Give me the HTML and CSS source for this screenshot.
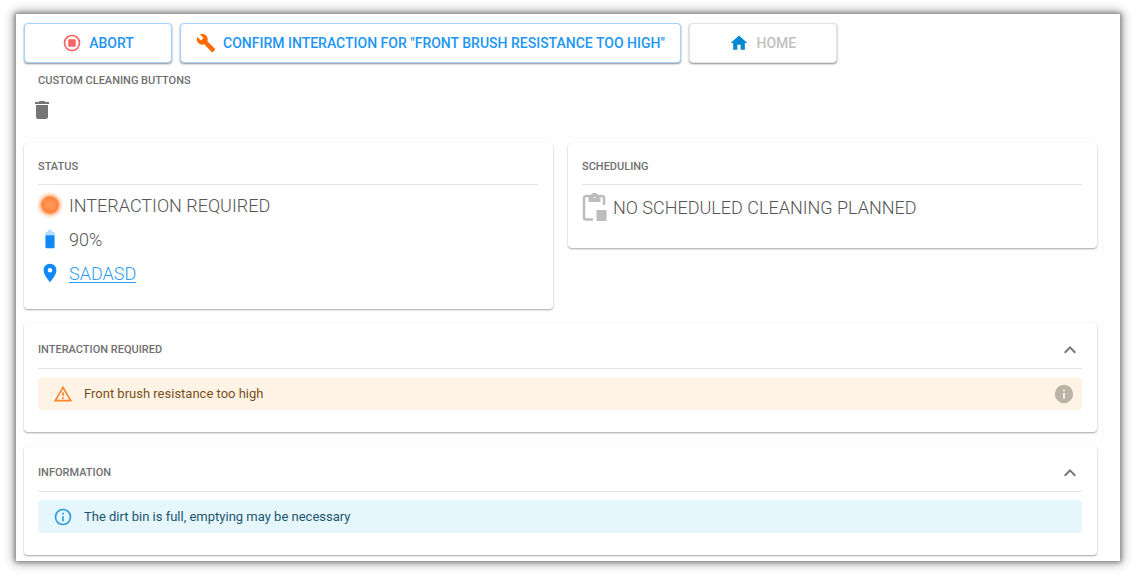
FILE: index.html
```
<!DOCTYPE html>
<html lang="en">
<head>
    <meta charset="UTF-8">
    <meta name="viewport" content="width=device-width, initial-scale=1.0">
    <title>Robot Dashboard</title>
    <link rel="stylesheet" href="styles.css">
</head>
<body>
    <main class="panel">
        <div class="actions">
            <button type="button" class="btn">
                <svg class="icon abort-icon" viewBox="0 0 24 24"><circle cx="12" cy="12" r="9" fill="none" stroke="currentColor" stroke-width="2"/><rect x="7.500" y="7.500" width="9" height="9" rx="1" fill="currentColor"/></svg>
                Abort
            </button>
            <button type="button" class="btn">
                <svg class="icon wrench-icon" viewBox="0 0 24 24"><path fill="currentColor" d="M22.7 19l-9.1-9.1c.9-2.3.4-5-1.5-6.9-2-2-5-2.4-7.4-1.3L9 6 6 9 1.6 4.7C.4 7.1.9 10.1 2.9 12.1c1.9 1.9 4.6 2.4 6.9 1.5l9.1 9.1c.4.4 1 .4 1.4 0l2.3-2.3c.5-.4.5-1.1.1-1.4z"/></svg>
                Confirm interaction for "Front brush resistance too high"
            </button>
            <button type="button" class="btn" disabled>
                <svg class="icon home-icon" viewBox="0 0 24 24"><path fill="currentColor" d="M10 20v-6h4v6h5v-8h3L12 3 2 12h3v8z"/></svg>
                Home
            </button>
        </div>

        <section class="custom">
            <h2>Custom cleaning buttons</h2>
            <button type="button" class="icon-btn" aria-label="Delete">
                <svg class="icon" viewBox="0 0 24 24"><path fill="currentColor" d="M6 19c0 1.1.9 2 2 2h8c1.1 0 2-.9 2-2V7H6v12zM19 4h-3.500l-1-1h-5l-1 1H5v2h14V4z"/></svg>
            </button>
        </section>

        <div class="cards">
            <section class="card">
                <header class="card-header"><h2>Status</h2></header>
                <ul class="status-list">
                    <li>
                        <span class="status-icon"><span class="status-light"></span></span>
                        Interaction required
                    </li>
                    <li>
                        <span class="status-icon">
                            <svg class="icon battery-icon" viewBox="0 0 24 24"><path fill="currentColor" fill-opacity=".3" d="M17 5.300C17 4.600 16.400 4 15.700 4H14V2h-4v2H8.300C7.600 4 7 4.600 7 5.300V8h10z"/><path fill="currentColor" d="M7 8v12.700c0 .7.6 1.300 1.300 1.300h7.400c.7 0 1.300-.6 1.300-1.300V8z"/></svg>
                        </span>
                        90%
                    </li>
                    <li>
                        <span class="status-icon">
                            <svg class="icon pin-icon" viewBox="0 0 24 24"><path fill="currentColor" d="M12 2C8.130 2 5 5.130 5 9c0 5.250 7 13 7 13s7-7.750 7-13c0-3.870-3.130-7-7-7zm0 9.500a2.500 2.500 0 0 1 0-5 2.500 2.500 0 0 1 0 5z"/></svg>
                        </span>
                        <a href="#">sadasd</a>
                    </li>
                </ul>
            </section>

            <section class="card">
                <header class="card-header"><h2>Scheduling</h2></header>
                <p class="schedule">
                    <svg class="schedule-icon" viewBox="0 0 24 30"><path fill="none" stroke="currentColor" stroke-width="2.500" d="M10.500 27.500H3.500a2 2 0 0 1-2-2V6a2 2 0 0 1 2-2h16a2 2 0 0 1 2 2v7"/><path fill="currentColor" fill-rule="evenodd" d="M6 3h2.500a3.800 3.800 0 0 1 7 0H18v7H6zM12 3a1.500 1.500 0 1 0 0 3 1.500 1.500 0 0 0 0-3z"/><path fill="currentColor" d="M14 18h10v11H14z"/></svg>
                    No scheduled cleaning planned
                </p>
            </section>
        </div>

        <section class="card">
            <header class="card-header collapsible">
                <h2>Interaction required</h2>
                <button type="button" class="icon-btn" aria-label="Collapse">
                    <svg class="icon" viewBox="0 0 24 24"><path fill="currentColor" d="M12 8l-6 6 1.410 1.410L12 10.830l4.590 4.580L18 14z"/></svg>
                </button>
            </header>
            <div class="alert warning">
                <svg class="icon alert-icon" viewBox="0 0 24 24"><path fill="currentColor" d="M12 5.990L19.530 19H4.470L12 5.990M12 2L1 21h22L12 2zm1 14h-2v2h2v-2zm0-6h-2v4h2v-4z"/></svg>
                <span>Front brush resistance too high</span>
                <button type="button" class="icon-btn info-btn" aria-label="More information">
                    <svg class="icon" viewBox="0 0 24 24"><path fill="currentColor" d="M12 2a10 10 0 1 0 0 20 10 10 0 0 0 0-20zm1 15h-2v-6h2v6zm0-8h-2V7h2v2z"/></svg>
                </button>
            </div>
        </section>

        <section class="card">
            <header class="card-header collapsible">
                <h2>Information</h2>
                <button type="button" class="icon-btn" aria-label="Collapse">
                    <svg class="icon" viewBox="0 0 24 24"><path fill="currentColor" d="M12 8l-6 6 1.410 1.410L12 10.830l4.590 4.580L18 14z"/></svg>
                </button>
            </header>
            <div class="alert info">
                <svg class="icon alert-icon" viewBox="0 0 24 24"><path fill="currentColor" d="M11 7h2v2h-2zm0 4h2v6h-2zm1-9a10 10 0 1 0 0 20 10 10 0 0 0 0-20zm0 18a8 8 0 1 1 0-16 8 8 0 0 1 0 16z"/></svg>
                <span>The dirt bin is full, emptying may be necessary</span>
            </div>
        </section>
    </main>
</body>
</html>
```
FILE: styles.css
```
* {
    box-sizing: border-box;
}
html {
    background: #fff;
}
body {
    margin: 0;
    padding: 14px 16px;
    font-family: Roboto, sans-serif;
    color: #555;
}
.panel {
    padding: 9px 23px 6px 8px;
    background: #fefefe;
    box-shadow: 0 0 4px 1px #888, 0 0 10px 2px #999;
}
h2 {
    margin: 0;
    font-size: 11px;
    line-height: 16px;
    font-weight: 500;
    text-transform: uppercase;
    color: #707070;
}
.icon {
    display: block;
    flex: none;
    width: 20px;
    height: 20px;
}
.actions {
    display: flex;
    flex-wrap: wrap;
    gap: 8px;
}
.btn {
    display: flex;
    align-items: center;
    justify-content: center;
    gap: 7px;
    min-width: 148px;
    height: 40px;
    padding: 0 15px;
    border: 1px solid #a5d3fa;
    border-radius: 4px;
    background: #fff;
    box-shadow: 0 1px 2px rgba(0, 0, 0, 0.45);
    font-family: Roboto, sans-serif;
    font-size: 14px;
    font-weight: 500;
    text-transform: uppercase;
    color: #2196f3;
    cursor: pointer;
}
.btn:disabled {
    border-color: #e4e4e4;
    color: #c0c0c0;
    cursor: default;
}
.abort-icon {
    color: #fa6464;
}
.wrench-icon {
    color: #ff6a00;
}
.home-icon {
    color: #0288d1;
}
.icon-btn {
    display: block;
    flex: none;
    padding: 0;
    border: none;
    background: none;
    color: #757575;
    cursor: pointer;
}
.icon-btn .icon {
    width: 24px;
    height: 24px;
}
.custom {
    padding: 10px 14px 21px;
}
.custom .icon-btn {
    margin: 9px 0 0 -8px;
}
.cards {
    display: grid;
    grid-template-columns: 1fr 1fr;
    align-items: start;
    gap: 15px;
}
.card {
    padding: 15px 15px 22px 14px;
    border-radius: 4px;
    background: #fff;
    box-shadow: 0 1px 2px rgba(0, 0, 0, 0.35);
}
.cards .card {
    padding-bottom: 19px;
}
.panel > .card {
    margin-top: 14px;
}
.card-header {
    display: flex;
    align-items: center;
    justify-content: space-between;
    height: 27px;
    padding-bottom: 8px;
    border-bottom: 1px solid #e4e4e4;
}
.collapsible {
    height: 31px;
    padding-bottom: 7px;
}
.status-list {
    margin: 3px 0 0;
    padding: 0;
    list-style: none;
}
.status-list li {
    display: flex;
    align-items: center;
    gap: 7px;
    height: 34px;
}
.status-list li,
.schedule {
    font-size: 18px;
    font-weight: 300;
    text-transform: uppercase;
}
.status-icon {
    display: flex;
    justify-content: center;
    width: 24px;
}
.status-icon .icon {
    width: 22px;
    height: 22px;
}
.status-light {
    width: 18px;
    height: 18px;
    border-radius: 50%;
    background: radial-gradient(#ff9a5c, #ff7a2c);
    box-shadow: 0 0 4px 1px #ff8a45;
}
.battery-icon,
.pin-icon {
    color: #1089f5;
}
.status-list a {
    color: #2f9df5;
    text-underline-offset: 2px;
    text-decoration-thickness: 1px;
}
.schedule {
    display: flex;
    align-items: center;
    gap: 6px;
    height: 44px;
    margin: 0;
}
.schedule-icon {
    width: 25px;
    height: 30px;
    color: #bdbdbd;
}
.alert {
    display: flex;
    align-items: center;
    gap: 11px;
    height: 33px;
    margin-top: 8px;
    padding: 0 7px 0 15px;
    border-radius: 4px;
    font-size: 13px;
}
.warning {
    background: #fff3e5;
    color: #7a4f1c;
}
.info {
    background: #e5f6fd;
    color: #1d556f;
}
.warning .alert-icon {
    color: #f5842c;
}
.info .alert-icon {
    color: #2b9edb;
}
.info-btn {
    margin-left: auto;
    color: #bbb2a8;
}
.info-btn .icon {
    width: 22px;
    height: 22px;
}
```
